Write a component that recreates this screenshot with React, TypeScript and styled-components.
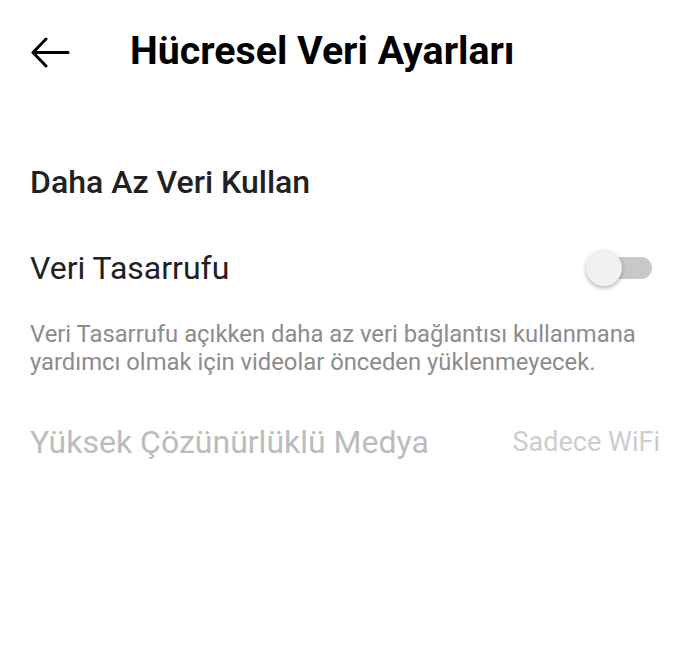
import React from "react";
import styled, { createGlobalStyle } from "styled-components";

const Global = createGlobalStyle`
  html, body { margin: 0; padding: 0; background: #fff; }
  body { font-family: Roboto, "Noto Sans", sans-serif; -webkit-font-smoothing: antialiased; }
`;

const Page = styled.div`
  width: 690px;
  height: 645px;
  background: #fff;
  display: flex;
  flex-direction: column;
`;

const Header = styled.header`
  height: 102px;
  display: flex;
  align-items: center;
  padding-left: 30px;
  gap: 58px;
`;

const BackButton = styled.button`
  border: 0;
  background: none;
  padding: 0;
  margin-top: 3px;
  width: 42px;
  height: 32px;
  display: flex;
  align-items: center;
  justify-content: flex-start;
`;

const Title = styled.h1`
  margin: 0;
  font-size: 39.3px;
  font-weight: 700;
  color: #000;
  line-height: 46px;
`;

const Content = styled.div`
  padding: 0 30px;
  display: flex;
  flex-direction: column;
`;

const SectionTitle = styled.h2`
  margin: 60px 0 0;
  font-size: 32px;
  font-weight: 500;
  color: #212121;
  line-height: 40px;
`;

const Row = styled.div<{ $gap: number }>`
  display: flex;
  align-items: center;
  justify-content: space-between;
  height: 60px;
  margin-top: ${(p) => p.$gap}px;
`;

const RowLabel = styled.span<{ $disabled?: boolean }>`
  font-size: 32px;
  font-weight: 400;
  color: ${(p) => (p.$disabled ? "#bcbcbc" : "#212121")};
`;

const RowValue = styled.span`
  font-size: 27px;
  color: #cdcdcd;
`;

const Toggle = styled.div`
  position: relative;
  width: 66px;
  height: 36px;
  margin-right: 8px;
`;

const Track = styled.div`
  position: absolute;
  left: 14px;
  top: 7px;
  width: 52px;
  height: 22px;
  border-radius: 11px;
  background: #c8c8c8;
`;

const Thumb = styled.div`
  position: absolute;
  left: 0;
  top: 0;
  width: 36px;
  height: 36px;
  border-radius: 50%;
  background: #f1f1f1;
  box-shadow: 0 2px 4px rgba(0, 0, 0, 0.3);
`;

const Description = styled.p`
  margin: 22px 0 0;
  font-size: 23.8px;
  line-height: 28px;
  color: #8c8c8c;
`;

export default function App() {
  return (
    <>
      <Global />
      <Page>
        <Header>
          <BackButton aria-label="Geri">
            <svg width="40" height="31" viewBox="0 0 40 31" fill="none">
              <path d="M38 15.5H3M16 2L3 15.5L16 29" stroke="#000" strokeWidth="3" strokeLinecap="round" strokeLinejoin="round" />
            </svg>
          </BackButton>
          <Title>Hücresel Veri Ayarları</Title>
        </Header>
        <Content>
          <SectionTitle>Daha Az Veri Kullan</SectionTitle>
          <Row $gap={36}>
            <RowLabel>Veri Tasarrufu</RowLabel>
            <Toggle>
              <Track />
              <Thumb />
            </Toggle>
          </Row>
          <Description>
            Veri Tasarrufu açıkken daha az veri bağlantısı kullanmana yardımcı olmak için videolar önceden yüklenmeyecek.
          </Description>
          <Row $gap={36}>
            <RowLabel $disabled>Yüksek Çözünürlüklü Medya</RowLabel>
            <RowValue>Sadece WiFi</RowValue>
          </Row>
        </Content>
      </Page>
    </>
  );
}
